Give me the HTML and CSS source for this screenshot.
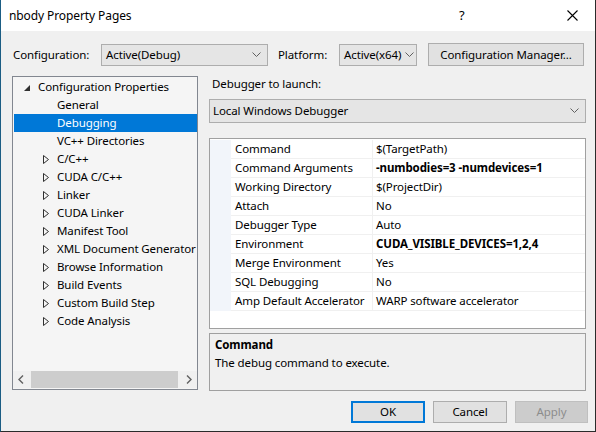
FILE: index.html
```html
<!DOCTYPE html>
<html>
<head>
<meta charset="utf-8">
<link rel="stylesheet" href="styles.css">
</head>
<body>
<div class="window">
  <div class="titlebar">
    <span class="title">nbody Property Pages</span>
    <span class="help">?</span>
    <svg class="close" width="11" height="11" viewBox="0 0 11 11"><path d="M0.5 0.5 L10.5 10.5 M10.5 0.5 L0.5 10.5" stroke="#000" stroke-width="1.1" fill="none"/></svg>
  </div>
  <div class="content">
    <div class="config-row">
      <span class="lbl lbl-cfg">Configuration:</span>
      <div class="combo combo-cfg"><span>Active(Debug)</span><svg class="chev" width="9" height="5" viewBox="0 0 9 5"><path d="M0.5 0.5 L4.5 4.5 L8.5 0.5" stroke="#606060" fill="none"/></svg></div>
      <span class="lbl lbl-plat">Platform:</span>
      <div class="combo combo-plat"><span>Active(x64)</span><svg class="chev" width="9" height="5" viewBox="0 0 9 5"><path d="M0.5 0.5 L4.5 4.5 L8.5 0.5" stroke="#606060" fill="none"/></svg></div>
      <div class="btn btn-mgr">Configuration Manager...</div>
    </div>
    <div class="main">
      <div class="tree">
        <ul class="tree-list">
          <li class="node lvl0"><svg class="tri-open" width="6" height="6" viewBox="0 0 6 6"><path d="M6 0 L6 6 L0 6 Z" fill="#303030"/></svg><span>Configuration Properties</span></li>
          <li class="node lvl1"><span>General</span></li>
          <li class="node lvl1 selected"><span>Debugging</span></li>
          <li class="node lvl1"><span>VC++ Directories</span></li>
          <li class="node lvl1 has"><svg class="tri" width="6" height="9" viewBox="0 0 6 9"><path d="M0.5 0.5 L5.5 4.5 L0.5 8.5 Z" stroke="#303030" fill="none"/></svg><span>C/C++</span></li>
          <li class="node lvl1 has"><svg class="tri" width="6" height="9" viewBox="0 0 6 9"><path d="M0.5 0.5 L5.5 4.5 L0.5 8.5 Z" stroke="#303030" fill="none"/></svg><span>CUDA C/C++</span></li>
          <li class="node lvl1 has"><svg class="tri" width="6" height="9" viewBox="0 0 6 9"><path d="M0.5 0.5 L5.5 4.5 L0.5 8.5 Z" stroke="#303030" fill="none"/></svg><span>Linker</span></li>
          <li class="node lvl1 has"><svg class="tri" width="6" height="9" viewBox="0 0 6 9"><path d="M0.5 0.5 L5.5 4.5 L0.5 8.5 Z" stroke="#303030" fill="none"/></svg><span>CUDA Linker</span></li>
          <li class="node lvl1 has"><svg class="tri" width="6" height="9" viewBox="0 0 6 9"><path d="M0.5 0.5 L5.5 4.5 L0.5 8.5 Z" stroke="#303030" fill="none"/></svg><span>Manifest Tool</span></li>
          <li class="node lvl1 has"><svg class="tri" width="6" height="9" viewBox="0 0 6 9"><path d="M0.5 0.5 L5.5 4.5 L0.5 8.5 Z" stroke="#303030" fill="none"/></svg><span>XML Document Generator</span></li>
          <li class="node lvl1 has"><svg class="tri" width="6" height="9" viewBox="0 0 6 9"><path d="M0.5 0.5 L5.5 4.5 L0.5 8.5 Z" stroke="#303030" fill="none"/></svg><span>Browse Information</span></li>
          <li class="node lvl1 has"><svg class="tri" width="6" height="9" viewBox="0 0 6 9"><path d="M0.5 0.5 L5.5 4.5 L0.5 8.5 Z" stroke="#303030" fill="none"/></svg><span>Build Events</span></li>
          <li class="node lvl1 has"><svg class="tri" width="6" height="9" viewBox="0 0 6 9"><path d="M0.5 0.5 L5.5 4.5 L0.5 8.5 Z" stroke="#303030" fill="none"/></svg><span>Custom Build Step</span></li>
          <li class="node lvl1 has"><svg class="tri" width="6" height="9" viewBox="0 0 6 9"><path d="M0.5 0.5 L5.5 4.5 L0.5 8.5 Z" stroke="#303030" fill="none"/></svg><span>Code Analysis</span></li>
        </ul>
        <div class="hscroll">
          <svg class="sarrow" width="17" height="17" viewBox="0 0 17 17"><path d="M10 4.5 L6 8.5 L10 12.5" stroke="#606060" stroke-width="1.4" fill="none"/></svg>
          <div class="strack"><div class="sthumb"></div></div>
          <svg class="sarrow" width="17" height="17" viewBox="0 0 17 17"><path d="M7 4.5 L11 8.5 L7 12.5" stroke="#606060" stroke-width="1.4" fill="none"/></svg>
        </div>
      </div>
      <div class="right">
        <div class="dl-label">Debugger to launch:</div>
        <div class="combo combo-dbg"><span>Local Windows Debugger</span><svg class="chev" width="9" height="5" viewBox="0 0 9 5"><path d="M0.5 0.5 L4.5 4.5 L8.5 0.5" stroke="#606060" fill="none"/></svg></div>
        <div class="grid">
          <div class="row"><div class="stripe"></div><div class="name">Command</div><div class="val">$(TargetPath)</div></div>
          <div class="row"><div class="stripe"></div><div class="name">Command Arguments</div><div class="val bold">-numbodies=3 -numdevices=1</div></div>
          <div class="row"><div class="stripe"></div><div class="name">Working Directory</div><div class="val">$(ProjectDir)</div></div>
          <div class="row"><div class="stripe"></div><div class="name">Attach</div><div class="val">No</div></div>
          <div class="row"><div class="stripe"></div><div class="name">Debugger Type</div><div class="val">Auto</div></div>
          <div class="row"><div class="stripe"></div><div class="name">Environment</div><div class="val bold">CUDA_VISIBLE_DEVICES=1,2,4</div></div>
          <div class="row"><div class="stripe"></div><div class="name">Merge Environment</div><div class="val">Yes</div></div>
          <div class="row"><div class="stripe"></div><div class="name">SQL Debugging</div><div class="val">No</div></div>
          <div class="row"><div class="stripe"></div><div class="name">Amp Default Accelerator</div><div class="val">WARP software accelerator</div></div>
        </div>
        <div class="desc">
          <div class="desc-title">Command</div>
          <div class="desc-text">The debug command to execute.</div>
        </div>
      </div>
    </div>
    <div class="buttons">
      <div class="btn btn-ok">OK</div>
      <div class="btn btn-cancel">Cancel</div>
      <div class="btn btn-apply">Apply</div>
    </div>
  </div>
</div>
</body>
</html>
```
FILE: styles.css
```css
* { box-sizing: border-box; }
html, body { margin: 0; padding: 0; }
body {
  width: 596px;
  height: 432px;
  background: #262626;
  font-family: "Segoe UI", "Noto Sans", "Liberation Sans", sans-serif;
  font-size: 11.5px;
  letter-spacing: -0.1px;
  color: #000;
  overflow: hidden;
}
.window {
  width: 596px;
  height: 432px;
  border-left: 1px solid #1b5d84;
  border-right: 1px solid #2b2b2b;
  border-bottom: 1px solid #2b2b2b;
  background: #f0f0f0;
  display: flex;
  flex-direction: column;
}
.titlebar {
  height: 31px;
  background: #fff;
  display: flex;
  align-items: center;
  padding-left: 8px;
  position: relative;
}
.title { font-size: 12px; line-height: 16px; }
.help {
  position: absolute;
  left: 458px;
  top: 7px;
  font-size: 13px;
  line-height: 16px;
}
.close {
  position: absolute;
  left: 566px;
  top: 10px;
}
.content {
  flex: 1;
  display: flex;
  flex-direction: column;
  padding: 12px 7px 0 11px;
}
.config-row {
  display: flex;
  align-items: center;
  height: 23px;
}
.lbl { line-height: 16px; }
.lbl-cfg { width: 89px; padding-left: 1px; }
.lbl-plat { width: 61px; margin-left: 10px; }
.combo {
  display: flex;
  align-items: center;
  justify-content: space-between;
  background: #e5e5e5;
  border: 1px solid #adadad;
  height: 22px;
  padding: 0 6px 0 4px;
}
.combo span { line-height: 16px; white-space: nowrap; }
.chev { flex: none; }
.combo-cfg { width: 167px; }
.combo-plat { width: 78px; padding-right: 2px; }
.btn {
  display: flex;
  align-items: center;
  justify-content: center;
  background: #e1e1e1;
  border: 1px solid #adadad;
  line-height: 16px;
}
.btn-mgr { width: 156px; height: 23px; margin-left: 11px; }
.main {
  display: flex;
  margin-top: 10px;
  height: 315px;
}
.tree {
  width: 186px;
  height: 314px;
  border: 1px solid #828790;
  background: #f5f5f5;
  display: flex;
  flex-direction: column;
  overflow: hidden;
}
.tree-list {
  list-style: none;
  margin: 0;
  padding: 1px 0 0 1px;
  flex: 1;
  overflow: hidden;
}
.node {
  height: 18px;
  display: flex;
  align-items: center;
  line-height: 16px;
  white-space: nowrap;
}
.node svg { flex: none; }
.lvl0 { padding-left: 10px; }
.lvl0 .tri-open { margin-right: 8px; margin-top: 1px; }
.lvl1 { padding-left: 43px; }
.lvl1.has { padding-left: 29px; }
.lvl1 .tri { margin-right: 8px; }
.node.selected { background: #0078d7; color: #fff; }
.hscroll {
  height: 17px;
  display: flex;
  align-items: stretch;
  background: #f0f0f0;
  margin-bottom: 1px;
  flex: none;
}
.sarrow { flex: none; }
.strack { flex: 1; padding: 0 1px; display: flex; }
.sthumb { width: 147px; background: #cdcdcd; }
.right {
  margin-left: 11px;
  width: 377px;
  display: flex;
  flex-direction: column;
}
.dl-label { line-height: 16px; padding-left: 3px; }
.combo-dbg { margin-top: 7px; height: 24px; padding-left: 3px; padding-right: 6px; }
.grid {
  margin-top: 15px;
  height: 193px;
  border: 1px solid #a0a0a0;
  background: #fff;
  padding-top: 1px;
}
.row {
  display: flex;
  height: 19px;
}
.stripe { width: 21px; background: #f2f5fa; }
.name, .val {
  border-bottom: 1px solid #f0f0f0;
  line-height: 18px;
  white-space: nowrap;
  overflow: hidden;
}
.name { width: 142px; padding-left: 4px; border-right: 1px solid #f0f0f0; }
.val { flex: 1; padding-left: 3px; }
.bold { font-weight: bold; }
.desc {
  margin-top: 4px;
  height: 58px;
  border: 1px solid #a0a0a0;
  background: #f0f0f0;
  padding: 3px 0 0 5px;
}
.desc-title { font-weight: bold; line-height: 16px; }
.desc-text { line-height: 16px; margin-top: 2px; }
.buttons {
  display: flex;
  justify-content: flex-end;
  gap: 8px;
  margin-top: 10px;
}
.buttons .btn { height: 22px; }
.btn-ok { width: 74px; border: 2px solid #0078d7; }
.btn-cancel { width: 74px; }
.btn-apply { width: 73px; background: #cccccc; border-color: #bfbfbf; color: #8c8c8c; }
```
